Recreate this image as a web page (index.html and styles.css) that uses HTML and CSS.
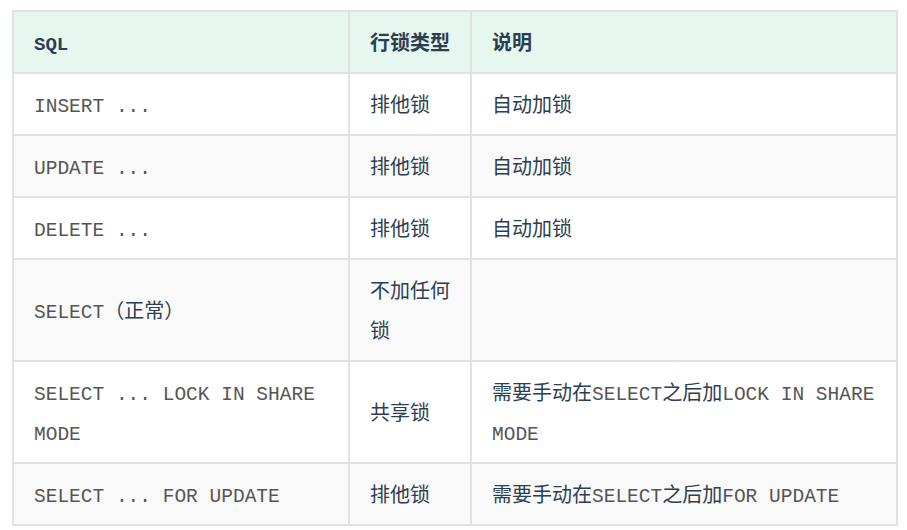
FILE: index.html
```html
<!DOCTYPE html>
<html lang="zh-CN">
<head>
<meta charset="utf-8">
<title>行锁类型</title>
<link rel="stylesheet" href="styles.css">
</head>
<body>
<table class="lock-table">
  <colgroup>
    <col class="c-sql">
    <col class="c-type">
    <col class="c-desc">
  </colgroup>
  <thead>
    <tr>
      <th><code>SQL</code></th>
      <th>行锁类型</th>
      <th>说明</th>
    </tr>
  </thead>
  <tbody>
    <tr>
      <td><code>INSERT ...</code></td>
      <td>排他锁</td>
      <td>自动加锁</td>
    </tr>
    <tr>
      <td><code>UPDATE ...</code></td>
      <td>排他锁</td>
      <td>自动加锁</td>
    </tr>
    <tr>
      <td><code>DELETE ...</code></td>
      <td>排他锁</td>
      <td>自动加锁</td>
    </tr>
    <tr>
      <td><code>SELECT</code>（正常）</td>
      <td>不加任何锁</td>
      <td></td>
    </tr>
    <tr>
      <td><code>SELECT ... LOCK IN SHARE MODE</code></td>
      <td>共享锁</td>
      <td>需要手动在<code>SELECT</code>之后加<code>LOCK IN SHARE MODE</code></td>
    </tr>
    <tr>
      <td><code>SELECT ... FOR UPDATE</code></td>
      <td>排他锁</td>
      <td>需要手动在<code>SELECT</code>之后加<code>FOR UPDATE</code></td>
    </tr>
  </tbody>
</table>
</body>
</html>
```
FILE: styles.css
```css
html, body {
  margin: 0;
  padding: 0;
  background: #ffffff;
}

body {
  padding: 10px 0 0 12px;
  font-family: "Noto Sans CJK SC", "Noto Sans", sans-serif;
  font-size: 20px;
  color: #2c3e50;
}

.lock-table {
  border-collapse: collapse;
  table-layout: fixed;
  width: 884px;
}

.c-sql { width: 336px; }
.c-type { width: 122px; }
.c-desc { width: 426px; }

.lock-table th,
.lock-table td {
  border: 2px solid #dfe2e5;
  padding: 10px 20px;
  line-height: 40px;
  text-align: left;
  vertical-align: middle;
}

.lock-table th {
  font-weight: 700;
  background: #e6f7ef;
  color: #2c3e50;
}

.lock-table tbody tr:nth-child(odd) {
  background: #ffffff;
}

.lock-table tbody tr:nth-child(even) {
  background: #f9f9f9;
}

.lock-table code {
  font-family: "Courier New", "Liberation Mono", monospace;
  font-size: 19.5px;
  line-height: 0;
  color: #555555;
}

.lock-table th code {
  font-weight: 700;
  color: #2c3e50;
  font-size: 19px;
}
```
